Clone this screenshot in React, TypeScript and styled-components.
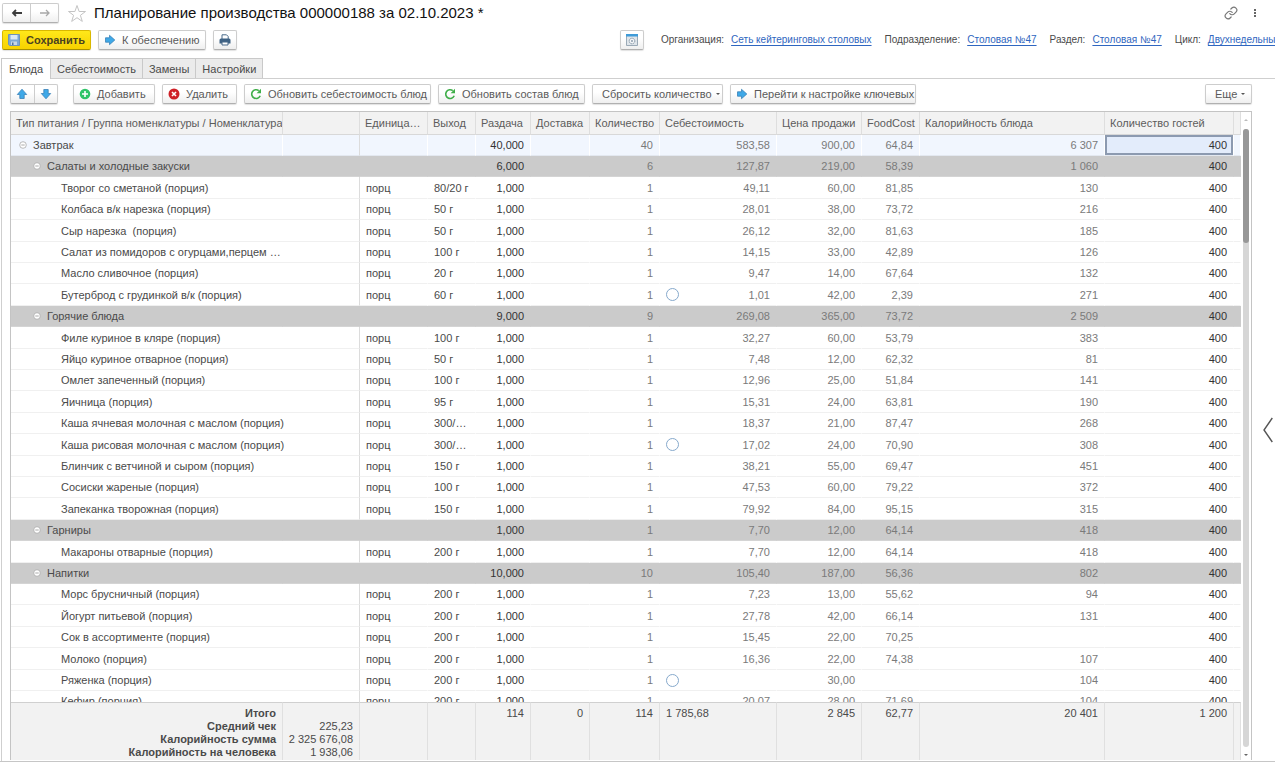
import React from 'react';
import styled, { createGlobalStyle, css } from 'styled-components';

const GlobalStyle = createGlobalStyle`
  *, *::before, *::after { box-sizing: border-box; }
  html, body { margin: 0; padding: 0; background: #fff; }
  body {
    font-family: "Liberation Sans", Arial, sans-serif;
    font-size: 11px;
    color: #4a4a4a;
    overflow: hidden;
  }
  button { font: inherit; color: inherit; margin: 0; }
`;

const Window = styled.div`
  display: flex;
  flex-direction: column;
  height: 100vh;
  border-bottom: 1px solid #c6c6c6;
`;

const TitleBar = styled.header`
  display: flex;
  align-items: center;
  height: 26px;
  padding: 0 18px 0 2px;
`;

const buttonFace = css`
  border: 1px solid #cdcdcd;
  border-bottom-color: #b0b0b0;
  border-radius: 2px;
  background: linear-gradient(#fff 40%, #efefef);
  box-shadow: 0 1px 1px #e2e2e2;
`;

const SplitGroup = styled.div<{ $width: number }>`
  ${buttonFace}
  display: flex;
  width: ${p => p.$width}px;
  height: 20px;
`;

const SplitButton = styled.button`
  flex: 1;
  display: flex;
  align-items: center;
  justify-content: center;
  padding: 0;
  border: 0;
  background: transparent;
  & + & { border-left: 1px solid #cdcdcd; }
`;

const PlainButton = styled.button`
  display: flex;
  align-items: center;
  justify-content: center;
  padding: 0;
  border: 0;
  background: transparent;
`;

const StarButton = styled(PlainButton)`
  margin-left: 8px;
`;

const Title = styled.h1`
  flex: 1;
  margin: 0 0 0 7px;
  font-size: 15px;
  font-weight: 400;
  line-height: 20px;
  color: #111;
  white-space: nowrap;
`;

const TitleTools = styled.div`
  display: flex;
  align-items: center;
  gap: 15px;
`;

const CommandBar = styled.div`
  display: flex;
  align-items: center;
  gap: 7px;
  height: 28px;
  padding-left: 2px;
  overflow: hidden;
`;

const Button = styled.button<{ $primary?: boolean; $menu?: boolean; $width: number }>`
  ${buttonFace}
  display: flex;
  align-items: center;
  flex: none;
  gap: ${p => (p.$menu ? 4 : 6)}px;
  min-width: ${p => p.$width}px;
  height: 20px;
  padding: 0 0 0 ${p => (p.$menu ? 9 : 5)}px;
  line-height: 16px;
  color: #5a5a5a;
  white-space: nowrap;
  ${p => p.$primary && css`
    border-color: #d9b800;
    border-bottom-color: #a89000;
    background: linear-gradient(#ffe81a, #f7d200);
    color: #4a4220;
    font-weight: 700;
  `}
`;

const Spacer = styled.div`
  flex: 1;
`;

const Params = styled.div`
  display: flex;
  flex: 0 0 624px;
  gap: 13px;
  padding-left: 10px;
  overflow: hidden;
  font-size: 10px;
  line-height: 16px;
  white-space: nowrap;
`;

const Param = styled.span`
  display: flex;
  flex: none;
  gap: 7px;
  a { color: #2f66c0; text-decoration: underline; text-underline-offset: 2px; }
`;

const Tabs = styled.div`
  display: flex;
  height: 20px;
  margin: 4px 0 0 1px;
`;

const Tab = styled.button<{ $active?: boolean }>`
  position: relative;
  height: ${p => (p.$active ? 21 : 20)}px;
  padding: 0 ${p => (p.$active ? 7 : 6)}px;
  border: 1px solid #c9c9c9;
  border-bottom: 0;
  background: ${p => (p.$active ? '#fff' : '#ebebeb')};
  line-height: 18px;
  z-index: ${p => (p.$active ? 1 : 0)};
  & + & { border-left-width: 0; }
`;

const Panel = styled.main`
  display: flex;
  flex: 1;
  min-height: 0;
  margin-left: 1px;
  border-top: 1px solid #cfcfcf;
  border-left: 1px solid #cfcfcf;
`;

const PanelBody = styled.div`
  display: flex;
  flex: 1;
  flex-direction: column;
  min-width: 0;
  padding: 5px 0 1px 8px;
`;

const Toolbar = styled.div`
  display: flex;
  gap: 7px;
  margin-bottom: 7px;
`;

const Gap = styled.div`
  width: 1px;
`;

const Caret = styled.span`
  width: 0;
  border: 2px solid transparent;
  border-top-color: #555;
  border-bottom: 0;
`;

const SidePane = styled.aside`
  display: flex;
  align-items: center;
  justify-content: flex-end;
  width: 23px;
  padding: 20px 2px 0 0;
`;

const GridFrame = styled.div`
  display: flex;
  flex: 1;
  min-height: 0;
  border: 1px solid #c4c4c4;
  border-bottom: 0;
`;

const Scroller = styled.div`
  flex: 1;
  min-width: 0;
  overflow: auto;
  scrollbar-width: none;
`;

const Table = styled.table`
  width: 100%;
  table-layout: fixed;
  border-collapse: separate;
  border-spacing: 0;

  th, td {
    padding: 0 6px;
    text-align: left;
    font-weight: 400;
    white-space: nowrap;
    overflow: hidden;
  }
  thead th { padding: 0 0 0 5px; }
`;

const HeadCell = styled.th`
  position: sticky;
  top: 0;
  z-index: 1;
  height: 23px;
  border-right: 1px solid #dedede;
  border-bottom: 1px solid #d8d8d8;
  background: #f2f2f2;
  line-height: 20px;
  color: #5c5c5c;
`;

type Kind = 'meal' | 'group' | 'dish';

const rowColors: Record<Kind, { fill: string; line: string; split: string }> = {
  meal: { fill: '#f1f6fe', line: '#e3e8f0', split: '#fff' },
  group: { fill: '#cbcbcb', line: '#d4d4d4', split: '#cbcbcb' },
  dish: { fill: '#fff', line: '#f0f0f0', split: '#fff' },
};

const Row = styled.tr<{ $kind: Kind }>`
  background: ${p => rowColors[p.$kind].fill};
  td {
    height: 21px;
    border-bottom: 1px solid ${p => rowColors[p.$kind].line};
    border-right: 1px solid ${p => rowColors[p.$kind].split};
    line-height: 20px;
  }
  td:nth-child(1) { padding-left: ${p => ({ meal: 8, group: 22, dish: 50 })[p.$kind]}px; }
  ${p => p.$kind !== 'group' && 'td.tree-end { border-right-color: #dcdcdc; }'}
  &:nth-child(5n + 3) td, &:nth-child(5n + 5) td { height: 22px; }
`;

const Cell = styled.td<{ $right?: boolean; $strong?: boolean; $selected?: boolean }>`
  && { text-align: ${p => (p.$right ? 'right' : 'left')}; }
  color: ${p => (p.$strong ? '#333' : p.$right ? '#7a7a7a' : '#4a4a4a')};
  ${p => p.$selected && css`
    background: #e3ecfb;
    box-shadow: inset 0 0 0 2px #8c9ab0;
  `}
`;

const NameBox = styled.div`
  display: flex;
  align-items: center;
  gap: 6px;
  white-space: pre;
`;

const CostBox = styled.div`
  display: flex;
  align-items: center;
  justify-content: space-between;
`;

const Marker = styled.span`
  display: block;
  width: 13px;
  height: 13px;
  border: 1px solid #86a9cc;
  border-radius: 50%;
  background: #fff;
`;

const FootCell = styled.td<{ $right?: boolean; $bold?: boolean }>`
  position: sticky;
  bottom: 0;
  height: 58px;
  border-top: 1px solid #d0d0d0;
  border-right: 1px solid #e0e0e0;
  background: #f2f2f2;
  line-height: 13px;
  vertical-align: top;
  && {
    padding-top: 4px;
    padding-left: ${p => (p.$right ? 0 : 6)}px;
    text-align: ${p => (p.$right ? 'right' : 'left')};
    font-weight: ${p => (p.$bold ? 700 : 400)};
  }
`;

const ScrollTrack = styled.div`
  display: flex;
  flex-direction: column;
  align-items: center;
  width: 10px;
  padding: 7px 0 4px;
`;

const ScrollArrow = styled.span<{ $down?: boolean }>`
  border: 2px solid transparent;
  ${p => (p.$down
    ? 'border-top-color: #666; border-bottom: 0;'
    : 'border-bottom-color: #bbb; border-top: 0;')}
`;

const Rail = styled.div`
  flex: 1;
  width: 6px;
  margin: 8px 0 7px;
  border-radius: 3px;
  background: #d6d6d6;
`;

const Thumb = styled.div`
  height: 114px;
  border-radius: 3px;
  background: #979797;
`;

const turns = { up: -90, right: 0, down: 90 };

const ArrowIcon = ({ dir }: { dir: keyof typeof turns }) => (
  <svg width="12" height="12" viewBox="0 0 12 12">
    <path
      transform={`rotate(${turns[dir]} 6 6)`}
      d="M1.500 3.800h4V1.300L10.800 6l-5.300 4.700V8.200h-4z"
      fill="#3fa9e8"
      stroke="#3a82b8"
      strokeWidth="0.800"
      strokeLinejoin="round"
    />
  </svg>
);

const NavArrow = ({ back }: { back?: boolean }) => (
  <svg width="12" height="10" viewBox="0 0 12 10" fill="none" stroke={back ? '#3c3c3c' : '#a8a8a8'} strokeWidth={back ? 1.8 : 1.3}>
    {back ? <path d="M11 5H2M5 2L2 5L5 8" /> : <path d="M1 5h9M7 2L10 5L7 8" />}
  </svg>
);

const StarIcon = () => (
  <svg width="20" height="19" viewBox="0 0 20 19" fill="#fff" stroke="#c4c4c4" strokeWidth="1">
    <path d="M10 1.500l2.100 6h6.400l-5.100 3.800 1.900 6.100L10 13.700l-5.300 3.700 1.900-6.100L1.500 7.500h6.400z" />
  </svg>
);

const DiskIcon = () => (
  <svg width="12" height="12" viewBox="0 0 12 12">
    <path d="M.5.5h11v11h-10l-1-1z" fill="#7ba7d4" stroke="#6f93b8" />
    <path d="M2.500 1h7v4.500h-7z" fill="#dbe8f4" />
    <path d="M3 7.500h6V11H3z" fill="#c7d6e6" />
    <path d="M4 8.500h1.500V11H4z" fill="#52749c" />
  </svg>
);

const PrinterIcon = () => (
  <svg width="12" height="12" viewBox="0 0 12 12">
    <path d="M3 5V.8h4.500L9.200 2.500V5" fill="#fff" stroke="#4a6b8a" />
    <path d="M2 4.500h8q1.500 0 1.500 1.500v3.500H.5V6q0-1.500 1.500-1.500z" fill="#3f6284" />
    <path d="M3 8h6v3H3z" fill="#fff" stroke="#4a6b8a" />
  </svg>
);

const SettingsListIcon = () => (
  <svg width="12" height="12" viewBox="0 0 12 12" fill="none">
    <path d="M.5 1.500h11v10H.5z" fill="#dfe5ea" stroke="#9aa9b6" />
    <path d="M0 0h12v2.500H0z" fill="#3f9bd8" />
    <circle cx="6" cy="7" r="2.800" fill="#f4f6f8" stroke="#8294a5" strokeDasharray="1.500 0.700" />
    <circle cx="6" cy="7" r="0.900" fill="#8294a5" />
  </svg>
);

const PlusIcon = () => (
  <svg width="12" height="12" viewBox="0 0 12 12">
    <circle cx="6" cy="6" r="5.300" fill="#2fc468" />
    <path d="M6 3v6M3 6h6" stroke="#fff" strokeWidth="1.600" />
  </svg>
);

const CrossIcon = () => (
  <svg width="12" height="12" viewBox="0 0 12 12">
    <circle cx="6" cy="6" r="5.500" fill="#cf2027" />
    <path d="M4 4l4 4M8 4L4 8" stroke="#fff" strokeWidth="1.600" />
  </svg>
);

const RefreshIcon = () => (
  <svg width="12" height="12" viewBox="0 0 12 12" fill="none">
    <path d="M8.800 2.600A4.400 4.400 0 1 0 10.200 7.800" stroke="#3fae49" strokeWidth="1.600" />
    <path d="M11 .8v4.400H6.600z" fill="#3fae49" />
  </svg>
);

const LinkIcon = () => (
  <svg width="14" height="14" viewBox="0 0 24 24" fill="none" stroke="#777" strokeWidth="2" strokeLinecap="round">
    <path d="M10 13a5 5 0 0 0 7.540.540l3-3a5 5 0 0 0-7.070-7.070l-1.720 1.710" />
    <path d="M14 11a5 5 0 0 0-7.540-.540l-3 3a5 5 0 0 0 7.070 7.070l1.710-1.710" />
  </svg>
);

const DotsIcon = () => (
  <svg width="4" height="10" viewBox="0 0 4 10" fill="#666">
    <path d="M1 1h2v2H1zM1 4h2v2H1zM1 7h2v2H1z" />
  </svg>
);

const CollapseIcon = () => (
  <svg width="8" height="8" viewBox="0 0 8 8" fill="#fff" stroke="#aaa">
    <circle cx="4" cy="4" r="3.300" strokeWidth="0.800" />
    <path d="M2.300 4h3.400" />
  </svg>
);

const ChevronIcon = () => (
  <svg width="10" height="26" viewBox="0 0 10 26" fill="none" stroke="#555" strokeWidth="1.400">
    <path d="M9.300 1L1 13l8.300 12" />
  </svg>
);

type Item = [Kind, string, string, string, string, string, string, string, string, string, boolean?];

const items: Item[] = [
  ['meal', 'Завтрак', '', '', '40,000', '40', '583,58', '900,00', '64,84', '6 307'],
  ['group', 'Салаты и холодные закуски', '', '', '6,000', '6', '127,87', '219,00', '58,39', '1 060'],
  ['dish', 'Творог со сметаной (порция)', 'порц', '80/20 г', '1,000', '1', '49,11', '60,00', '81,85', '130'],
  ['dish', 'Колбаса в/к нарезка (порция)', 'порц', '50 г', '1,000', '1', '28,01', '38,00', '73,72', '216'],
  ['dish', 'Сыр нарезка  (порция)', 'порц', '50 г', '1,000', '1', '26,12', '32,00', '81,63', '185'],
  ['dish', 'Салат из помидоров с огурцами,перцем …', 'порц', '100 г', '1,000', '1', '14,15', '33,00', '42,89', '126'],
  ['dish', 'Масло сливочное (порция)', 'порц', '20 г', '1,000', '1', '9,47', '14,00', '67,64', '132'],
  ['dish', 'Бутерброд с грудинкой в/к (порция)', 'порц', '60 г', '1,000', '1', '1,01', '42,00', '2,39', '271', true],
  ['group', 'Горячие блюда', '', '', '9,000', '9', '269,08', '365,00', '73,72', '2 509'],
  ['dish', 'Филе куриное в кляре (порция)', 'порц', '100 г', '1,000', '1', '32,27', '60,00', '53,79', '383'],
  ['dish', 'Яйцо куриное отварное (порция)', 'порц', '50 г', '1,000', '1', '7,48', '12,00', '62,32', '81'],
  ['dish', 'Омлет запеченный (порция)', 'порц', '100 г', '1,000', '1', '12,96', '25,00', '51,84', '141'],
  ['dish', 'Яичница (порция)', 'порц', '95 г', '1,000', '1', '15,31', '24,00', '63,81', '190'],
  ['dish', 'Каша ячневая молочная с маслом (порция)', 'порц', '300/…', '1,000', '1', '18,37', '21,00', '87,47', '268'],
  ['dish', 'Каша рисовая молочная с маслом (порция)', 'порц', '300/…', '1,000', '1', '17,02', '24,00', '70,90', '308', true],
  ['dish', 'Блинчик с ветчиной и сыром (порция)', 'порц', '150 г', '1,000', '1', '38,21', '55,00', '69,47', '451'],
  ['dish', 'Сосиски жареные (порция)', 'порц', '100 г', '1,000', '1', '47,53', '60,00', '79,22', '372'],
  ['dish', 'Запеканка творожная (порция)', 'порц', '150 г', '1,000', '1', '79,92', '84,00', '95,15', '315'],
  ['group', 'Гарниры', '', '', '1,000', '1', '7,70', '12,00', '64,14', '418'],
  ['dish', 'Макароны отварные (порция)', 'порц', '200 г', '1,000', '1', '7,70', '12,00', '64,14', '418'],
  ['group', 'Напитки', '', '', '10,000', '10', '105,40', '187,00', '56,36', '802'],
  ['dish', 'Морс брусничный (порция)', 'порц', '200 г', '1,000', '1', '7,23', '13,00', '55,62', '94'],
  ['dish', 'Йогурт питьевой (порция)', 'порц', '200 г', '1,000', '1', '27,78', '42,00', '66,14', '131'],
  ['dish', 'Сок в ассортименте (порция)', 'порц', '200 г', '1,000', '1', '15,45', '22,00', '70,25', ''],
  ['dish', 'Молоко (порция)', 'порц', '200 г', '1,000', '1', '16,36', '22,00', '74,38', '107'],
  ['dish', 'Ряженка (порция)', 'порц', '200 г', '1,000', '1', '', '30,00', '', '104', true],
  ['dish', 'Кефир (порция)', 'порц', '200 г', '1,000', '1', '20,07', '28,00', '71,69', '104'],
];

const columns: [string, string?][] = [
  ['Тип питания / Группа номенклатуры / Номенклатура'],
  ['', '77'],
  ['Единица…', '68'],
  ['Выход', '48'],
  ['Раздача', '55'],
  ['Доставка', '59'],
  ['Количество', '70'],
  ['Себестоимость', '117'],
  ['Цена продажи', '85'],
  ['FoodCost', '58'],
  ['Калорийность блюда', '185'],
  ['Количество гостей', '129'],
  ['', '7'],
];

const params = [
  ['Организация:', 'Сеть кейтеринговых столовых'],
  ['Подразделение:', 'Столовая №47'],
  ['Раздел:', 'Столовая №47'],
  ['Цикл:', 'Двухнедельный'],
];

const DishTable = () => (
  <Table>
    <colgroup>
      {columns.map(([, width], i) => <col key={i} width={width} />)}
    </colgroup>
    <thead>
      <tr>{columns.map(([label], i) => <HeadCell key={i} scope="col">{label}</HeadCell>)}</tr>
    </thead>
    <tbody>
      {items.map(([kind, name, unit, output, issue, qty, cost, price, foodCost, kcal, marked], i) => (
        <Row key={i} $kind={kind}>
          {kind === 'dish' ? (
            <Cell className="tree-end" colSpan={2}><NameBox>{name}</NameBox></Cell>
          ) : (
            <>
              <Cell><NameBox><CollapseIcon />{name}</NameBox></Cell>
              <Cell className="tree-end" />
            </>
          )}
          <Cell>{unit}</Cell>
          <Cell>{output}</Cell>
          <Cell $right $strong>{issue}</Cell>
          <Cell />
          <Cell $right>{qty}</Cell>
          <Cell $right>{marked ? <CostBox><Marker />{cost}</CostBox> : cost}</Cell>
          <Cell $right>{price}</Cell>
          <Cell $right>{foodCost}</Cell>
          <Cell $right>{kcal}</Cell>
          <Cell $right $strong $selected={i === 0}>400</Cell>
          <Cell />
        </Row>
      ))}
    </tbody>
    <tfoot>
      <tr>
        <FootCell $right $bold>Итого<br />Средний чек<br />Калорийность сумма<br />Калорийность на человека</FootCell>
        <FootCell $right><br />225,23<br />2 325 676,08<br />1 938,06</FootCell>
        <FootCell />
        <FootCell />
        <FootCell $right>114</FootCell>
        <FootCell $right>0</FootCell>
        <FootCell $right>114</FootCell>
        <FootCell>1 785,68</FootCell>
        <FootCell $right>2 845</FootCell>
        <FootCell $right>62,77</FootCell>
        <FootCell $right>20 401</FootCell>
        <FootCell $right>1 200</FootCell>
        <FootCell />
      </tr>
    </tfoot>
  </Table>
);

export default function App() {
  return (
    <Window>
      <GlobalStyle />
      <TitleBar>
        <SplitGroup $width={57}>
          <SplitButton aria-label="Назад"><NavArrow back /></SplitButton>
          <SplitButton aria-label="Вперед"><NavArrow /></SplitButton>
        </SplitGroup>
        <StarButton aria-label="В избранное"><StarIcon /></StarButton>
        <Title>Планирование производства 000000188 за 02.10.2023 *</Title>
        <TitleTools>
          <PlainButton aria-label="Ссылка"><LinkIcon /></PlainButton>
          <PlainButton aria-label="Меню"><DotsIcon /></PlainButton>
        </TitleTools>
      </TitleBar>

      <CommandBar>
        <Button $primary $width={89}><DiskIcon />Сохранить</Button>
        <Button $width={108}><ArrowIcon dir="right" />К обеспечению</Button>
        <Button $width={24} aria-label="Печать"><PrinterIcon /></Button>
        <Spacer />
        <Button $width={24} aria-label="Настройка периода"><SettingsListIcon /></Button>
        <Params>
          {params.map(([label, value]) => (
            <Param key={label}>{label}<a href="#">{value}</a></Param>
          ))}
        </Params>
      </CommandBar>

      <Tabs role="tablist">
        <Tab role="tab" $active>Блюда</Tab>
        <Tab role="tab">Себестоимость</Tab>
        <Tab role="tab">Замены</Tab>
        <Tab role="tab">Настройки</Tab>
      </Tabs>

      <Panel>
        <PanelBody>
          <Toolbar>
            <SplitGroup $width={48}>
              <SplitButton aria-label="Вверх"><ArrowIcon dir="up" /></SplitButton>
              <SplitButton aria-label="Вниз"><ArrowIcon dir="down" /></SplitButton>
            </SplitGroup>
            <Gap />
            <Button $width={82}><PlusIcon />Добавить</Button>
            <Button $width={75}><CrossIcon />Удалить</Button>
            <Button $width={187}><RefreshIcon />Обновить себестоимость блюд</Button>
            <Button $width={147}><RefreshIcon />Обновить состав блюд</Button>
            <Button $menu $width={131}>Сбросить количество<Caret /></Button>
            <Button $width={186}><ArrowIcon dir="right" />Перейти к настройке ключевых</Button>
            <Spacer />
            <Button $menu $width={47}>Еще<Caret /></Button>
          </Toolbar>
          <GridFrame>
            <Scroller><DishTable /></Scroller>
            <ScrollTrack>
              <ScrollArrow />
              <Rail><Thumb /></Rail>
              <ScrollArrow $down />
            </ScrollTrack>
          </GridFrame>
        </PanelBody>
        <SidePane><PlainButton aria-label="Развернуть панель"><ChevronIcon /></PlainButton></SidePane>
      </Panel>
    </Window>
  );
}
